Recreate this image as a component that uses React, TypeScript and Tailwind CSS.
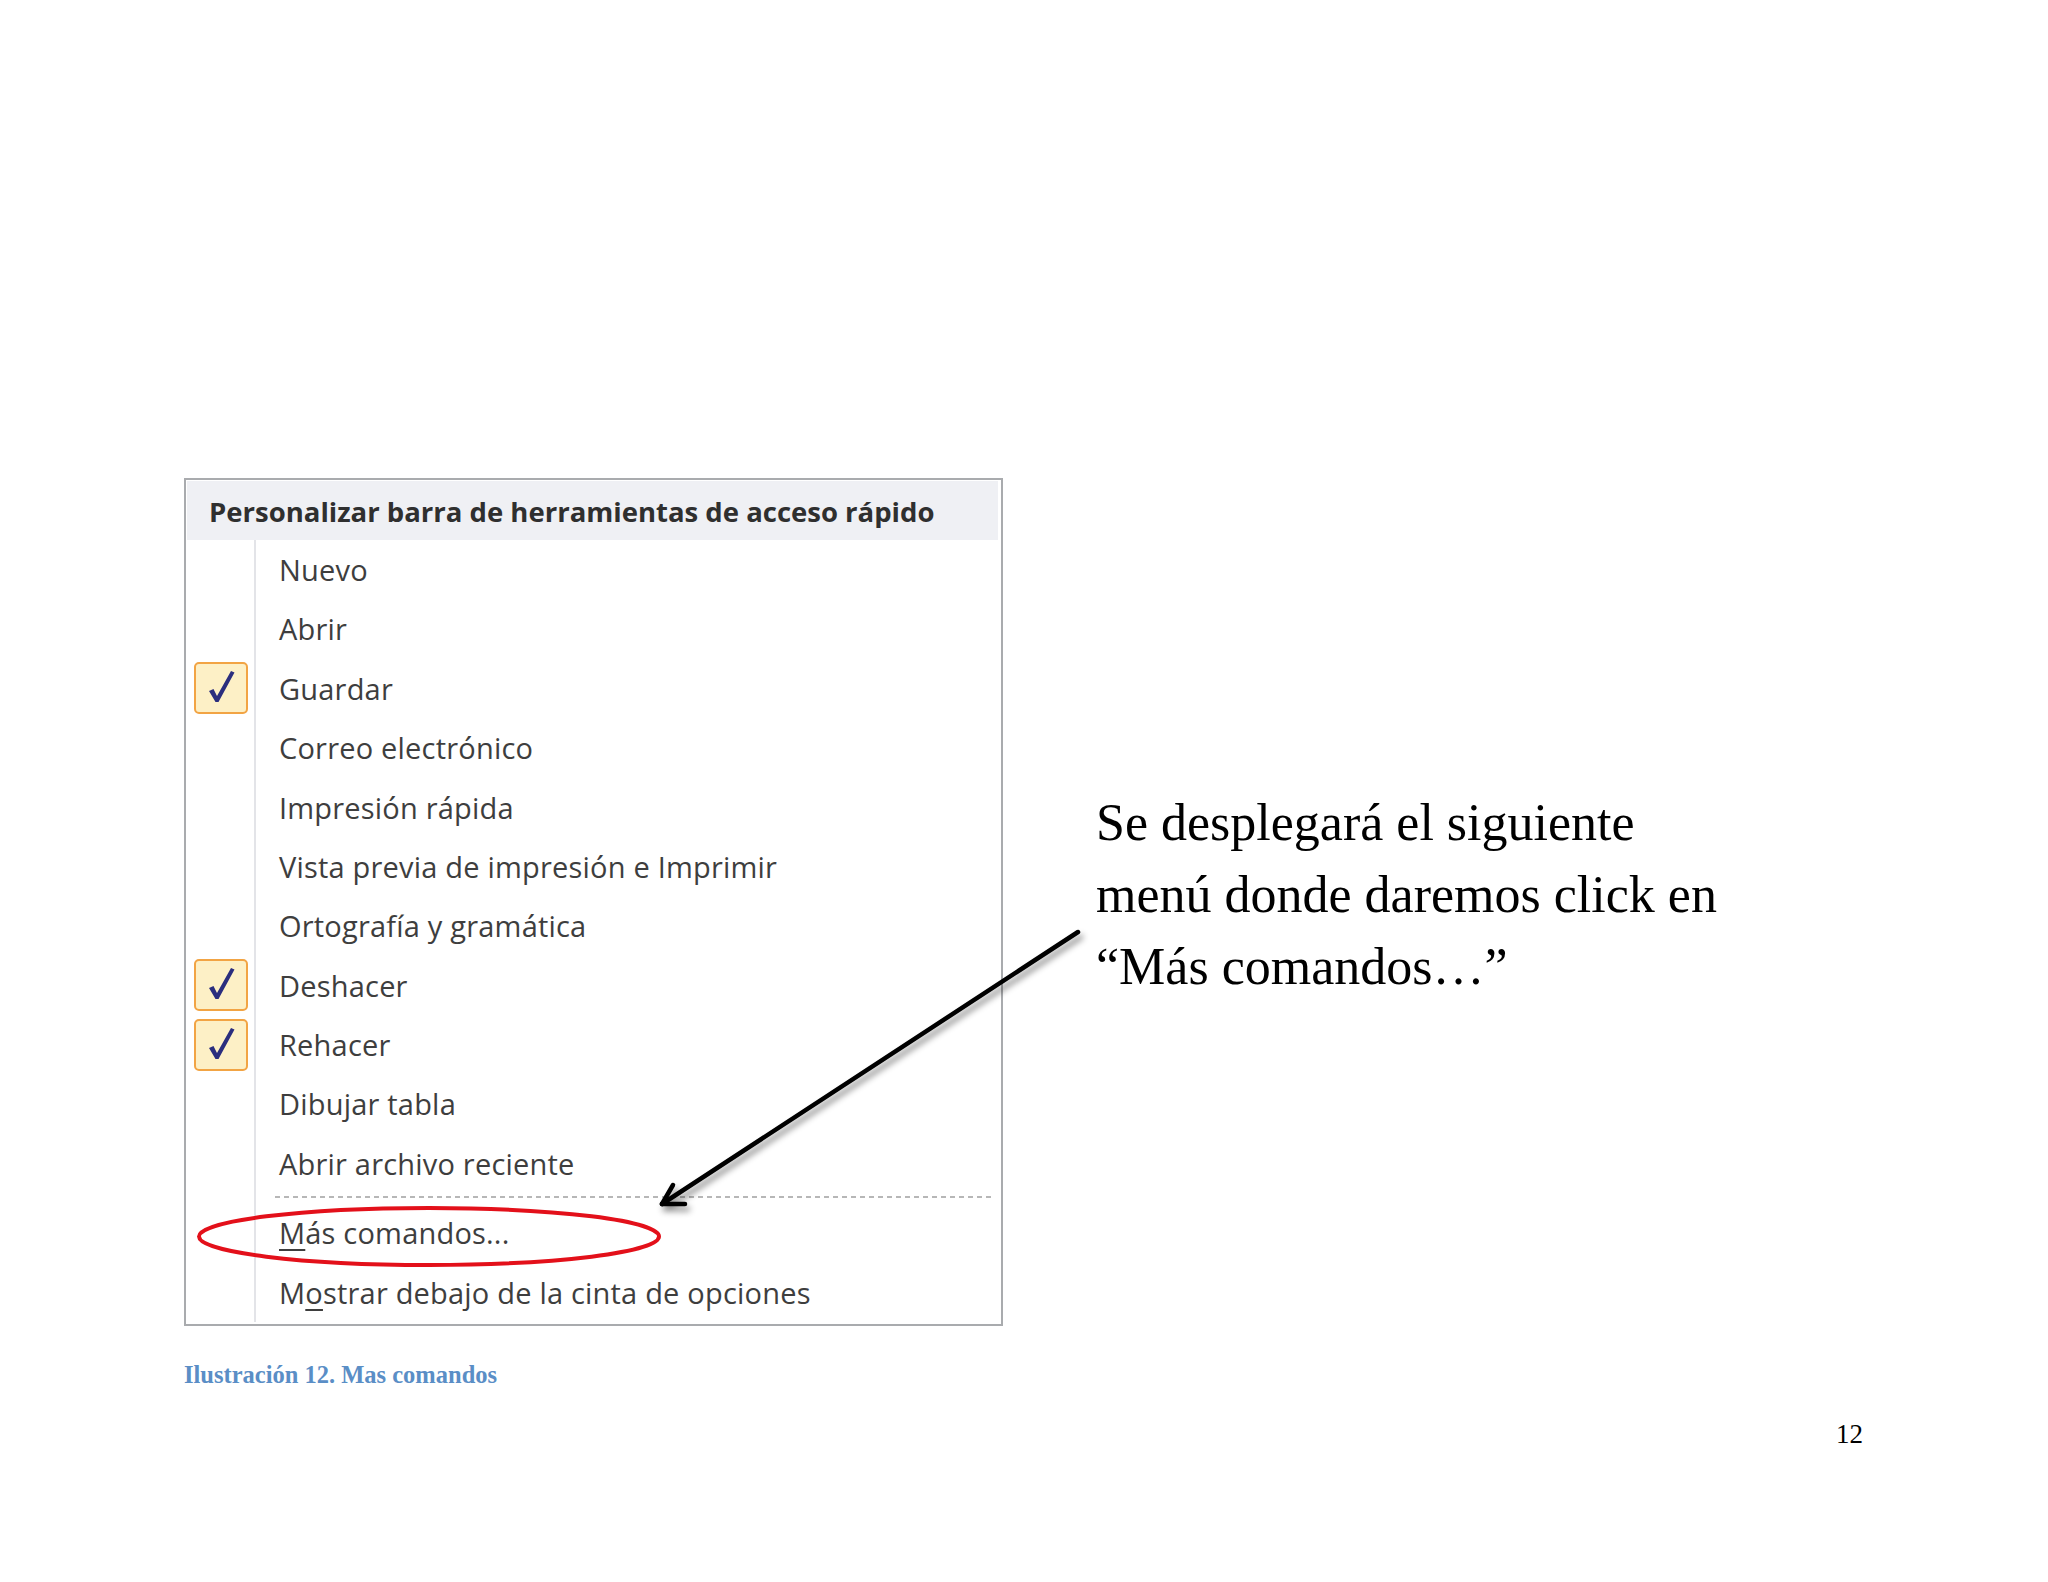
import React from 'react';

type Item = {
  label: React.ReactNode;
  checked?: boolean;
};

const items: Item[] = [
  { label: 'Nuevo' },
  { label: 'Abrir' },
  { label: 'Guardar', checked: true },
  { label: 'Correo electrónico' },
  { label: 'Impresión rápida' },
  { label: 'Vista previa de impresión e Imprimir' },
  { label: 'Ortografía y gramática' },
  { label: 'Deshacer', checked: true },
  { label: 'Rehacer', checked: true },
  { label: 'Dibujar tabla' },
  { label: 'Abrir archivo reciente' },
];

const CheckBox: React.FC = () => (
  <div className="w-[54px] h-[52px] rounded-[5px] border-2 border-[#f2a444] bg-[#fdf0c6] flex items-center justify-center">
    <svg width="50" height="48" viewBox="0 0 50 48">
      <path d="M13 27 L17.5 25 L21 32 L35 7 L38.5 8.5 L22.5 38 L19.5 38 Z" fill="#2b2e7e" />
    </svg>
  </div>
);

const Row: React.FC<{ checked?: boolean; children: React.ReactNode }> = ({ checked, children }) => (
  <div className="flex h-[59.4px] items-stretch">
    <div className="w-[68px] flex items-center pl-[8px]">{checked && <CheckBox />}</div>
    <div className="w-[2px] bg-[#e3e4e8]" />
    <div className="flex items-center pl-[23px] text-[29px] tracking-[0.2px] text-[#3e3e3e] whitespace-nowrap">{children}</div>
  </div>
);

const Menu: React.FC = () => (
  <div className="w-[819px] border-2 border-[#a9abae] bg-white font-['Open_Sans',sans-serif]">
    <div className="h-[59px] mx-[1px] mt-[1px] mr-[3px] bg-[#eff0f4] flex items-center pl-[22px] pt-[2px] text-[27.5px] font-bold text-[#2f2f2f] whitespace-nowrap">
      Personalizar barra de herramientas de acceso rápido
    </div>
    {items.map((it, i) => (
      <Row key={i} checked={it.checked}>
        {it.label}
      </Row>
    ))}
    {/* separator */}
    <div className="flex h-[10px] items-stretch">
      <div className="w-[68px]" />
      <div className="w-[2px] bg-[#e3e4e8]" />
      <div className="flex-1 pl-[19px] pr-[8px] pt-[3px]">
        <div className="h-[2px] bg-[repeating-linear-gradient(to_right,#b7b7b7_0_5px,transparent_5px_9px)]" />
      </div>
    </div>
    <Row>
      <span className="underline decoration-2 underline-offset-[5px]">M</span>ás comandos...
    </Row>
    <Row>
      M<span className="underline decoration-2 underline-offset-[5px]">o</span>strar debajo de la cinta de opciones
    </Row>
    <div className="h-[2px]" />
  </div>
);

const App: React.FC = () => {
  return (
    <div className="w-[2048px] h-[1582px] bg-white relative overflow-hidden">
      <div className="flex items-start pt-[478px] pl-[184px]">
        <div className="flex flex-col">
          <Menu />
          <p className="mt-[34px] text-[24.5px] leading-[30px] font-bold text-[#5a8ec6] font-['Liberation_Serif',serif]">
            Ilustración 12. Mas comandos
          </p>
        </div>
        <div className="ml-[93px] mt-[309px] text-[52px] leading-[72px] text-black font-['Liberation_Serif',serif] whitespace-nowrap">
          <div>Se desplegará el siguiente</div>
          <div>menú donde daremos click en</div>
          <div>“Más comandos…”</div>
        </div>
      </div>
      <div className="mt-[28px] pr-[185px] text-right text-[27px] leading-[32px] text-black font-['Liberation_Serif',serif]">
        12
      </div>

      {/* red highlight ellipse */}
      <svg className="absolute left-[194px] top-[1203px]" width="472" height="68" viewBox="0 0 472 68">
        <ellipse cx="235" cy="33.5" rx="230" ry="28.5" fill="none" stroke="#e3101a" strokeWidth="4" />
      </svg>

      {/* arrow */}
      <svg className="absolute left-[640px] top-[910px]" width="470" height="330" viewBox="0 0 470 330">
        <defs>
          <filter id="sh" x="-20%" y="-20%" width="140%" height="140%">
            <feDropShadow dx="3" dy="5" stdDeviation="3" floodColor="#000" floodOpacity="0.45" />
          </filter>
        </defs>
        <g filter="url(#sh)" stroke="#000" strokeWidth="4.5" strokeLinecap="round" fill="none">
          <line x1="438" y1="22" x2="22" y2="294" />
          <line x1="22" y1="294" x2="33" y2="275" />
          <line x1="22" y1="294" x2="45" y2="294" />
        </g>
      </svg>
    </div>
  );
};

export default App;
